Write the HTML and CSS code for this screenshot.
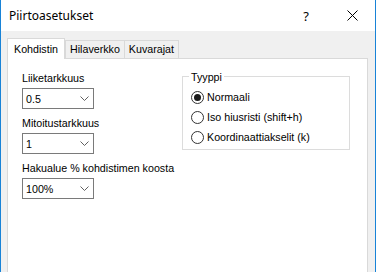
FILE: index.html
```html
<!DOCTYPE html>
<html lang="fi">
<head>
    <meta charset="UTF-8">
    <title>Piirtoasetukset</title>
    <link rel="stylesheet" href="styles.css">
</head>
<body>
    <div class="window">
        <div class="titlebar">
            <span class="title">Piirtoasetukset</span>
            <div class="caption-buttons">
                <span class="caption-btn help">?</span>
                <span class="caption-btn close">
                    <svg width="11" height="11" viewBox="0 0 11 11">
                        <path d="M0.5 0.5 L10.5 10.5 M10.5 0.5 L0.5 10.5" stroke="#000" stroke-width="1" fill="none"/>
                    </svg>
                </span>
            </div>
        </div>

        <div class="client">
            <div class="tabs">
                <div class="tab active">Kohdistin</div>
                <div class="tab">Hilaverkko</div>
                <div class="tab">Kuvarajat</div>
            </div>

            <div class="tab-page">
                <div class="left-col">
                    <div class="field-label">Liiketarkkuus</div>
                    <div class="combo">
                        <span class="combo-value">0.5</span>
                        <svg class="chevron" width="9" height="5" viewBox="0 0 9 5">
                            <polyline points="0.5,0.5 4.5,4.5 8.5,0.5" fill="none" stroke="#606060"/>
                        </svg>
                    </div>

                    <div class="field-label">Mitoitustarkkuus</div>
                    <div class="combo">
                        <span class="combo-value">1</span>
                        <svg class="chevron" width="9" height="5" viewBox="0 0 9 5">
                            <polyline points="0.5,0.5 4.5,4.5 8.5,0.5" fill="none" stroke="#606060"/>
                        </svg>
                    </div>

                    <div class="field-label">Hakualue % kohdistimen koosta</div>
                    <div class="combo">
                        <span class="combo-value">100%</span>
                        <svg class="chevron" width="9" height="5" viewBox="0 0 9 5">
                            <polyline points="0.5,0.5 4.5,4.5 8.5,0.5" fill="none" stroke="#606060"/>
                        </svg>
                    </div>
                </div>

                <fieldset class="group">
                    <legend>Tyyppi</legend>
                    <div class="radio checked"><span class="radio-circle"></span>Normaali</div>
                    <div class="radio"><span class="radio-circle"></span>Iso hiusristi (shift+h)</div>
                    <div class="radio"><span class="radio-circle"></span>Koordinaattiakselit (k)</div>
                </fieldset>
            </div>
        </div>
    </div>
</body>
</html>
```

FILE: styles.css
```css
* {
    margin: 0;
    padding: 0;
    box-sizing: border-box;
}

body {
    width: 376px;
    height: 272px;
    overflow: hidden;
    font-family: 'Liberation Sans', Arial, sans-serif;
    font-size: 10.7px;
    color: #000;
}

.window {
    height: 272px;
    border-left: 1px solid #1883d7;
    border-right: 1px solid #1883d7;
    background: #f0f0f0;
    display: flex;
    flex-direction: column;
}

/* Otsikkopalkki */
.titlebar {
    height: 31px;
    background: #fff;
    display: flex;
    align-items: center;
}

.title {
    font-family: 'Noto Sans', 'Open Sans', sans-serif;
    font-size: 12px;
    padding-left: 8px;
}

.caption-buttons {
    margin-left: auto;
    display: flex;
}

.caption-btn {
    width: 46px;
    height: 31px;
    display: flex;
    align-items: center;
    justify-content: center;
}

.help {
    font-family: 'Noto Sans', 'Open Sans', sans-serif;
    font-size: 13px;
}

/* Välilehdet */
.client {
    flex: 1;
    padding: 7px 7px 0 6px;
    overflow: hidden;
}

.tabs {
    display: flex;
    align-items: flex-end;
    height: 21px;
    position: relative;
    z-index: 1;
}

.tab {
    height: 19px;
    line-height: 17px;
    padding: 0 4px;
    border: 1px solid #d9d9d9;
    background: #f0f0f0;
    margin-left: -1px;
}

.tab.active {
    height: 21px;
    line-height: 20px;
    padding: 0 6px;
    margin-left: 0;
    margin-right: 1px;
    background: #fff;
    border-bottom: none;
}

.tab-page {
    margin-top: -1px;
    height: 240px;
    background: #fff;
    border: 1px solid #d9d9d9;
    display: grid;
    grid-template-columns: 160px 168px;
    align-items: start;
    padding: 13px 0 0 14px;
}

/* Vasen sarake */
.field-label {
    line-height: 13px;
    margin-top: 8px;
}

.field-label:first-child {
    margin-top: 0;
}

.combo {
    width: 72px;
    height: 21px;
    margin-top: 3px;
    border: 1px solid #7a7a7a;
    display: flex;
    align-items: center;
    padding: 0 4px 0 3px;
}

.combo-value {
    flex: 1;
}

/* Ryhmä */
.group {
    width: 168px;
    margin-top: -3px;
    border: 1px solid #dcdcdc;
    padding: 0 0 2px 8px;
}

.group legend {
    padding: 2px 2px 0;
    margin-left: -2px;
    line-height: 13px;
}

.radio {
    height: 20px;
    display: flex;
    align-items: center;
    gap: 3px;
}

.radio:first-of-type {
    margin-top: 3px;
}

.radio-circle {
    width: 13px;
    height: 13px;
    border: 1px solid #333;
    border-radius: 50%;
    background: #fff;
    display: flex;
    align-items: center;
    justify-content: center;
}

.radio.checked .radio-circle::after {
    content: '';
    width: 7px;
    height: 7px;
    border-radius: 50%;
    background: #1a1a1a;
}
```
